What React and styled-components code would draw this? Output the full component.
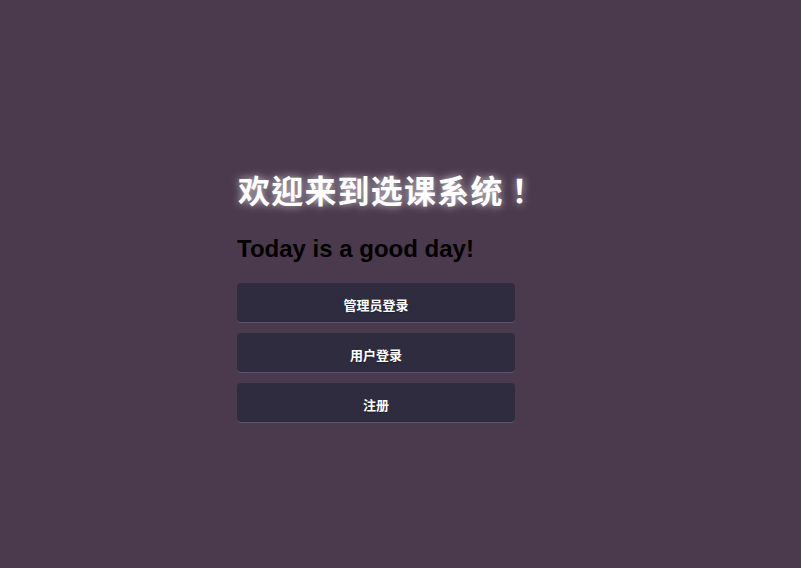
import React from "react";
import styled, { createGlobalStyle } from "styled-components";

const GlobalStyle = createGlobalStyle`
  html, body {
    margin: 0;
    padding: 0;
    height: 100%;
  }
  body {
    background: #4b394d;
    font-family: "Liberation Sans", Arial, "Noto Sans CJK SC", sans-serif;
  }
`;

const Page = styled.div`
  min-height: 568px;
  display: flex;
  justify-content: center;
  padding-top: 167px;
  box-sizing: border-box;
`;

const Login = styled.div`
  width: 327px;
  display: flex;
  flex-direction: column;
`;

const Title = styled.h1`
  margin: 0 0 0 1px;
  font-size: 32px;
  line-height: 44px;
  font-weight: bold;
  color: #fff;
  font-family: "Noto Sans CJK TC", "Liberation Sans", sans-serif;
  text-shadow: 0 0 8px rgba(255, 255, 255, 0.75);
  letter-spacing: 1.2px;
  white-space: nowrap;
`;

const Subtitle = styled.h2`
  margin: 24px 0 20px 0;
  font-size: 24px;
  line-height: 28px;
  font-weight: bold;
  color: #000;
`;

const ButtonList = styled.div`
  display: flex;
  flex-direction: column;
  gap: 10px;
`;

const Button = styled.button`
  width: 278px;
  height: 40px;
  border: none;
  border-radius: 4px;
  background: #2f2c40;
  box-shadow: inset 0 -1px 0 #5a5570;
  color: #fff;
  font-size: 13px;
  font-weight: bold;
  font-family: "Noto Sans CJK SC", "Liberation Sans", sans-serif;
  text-shadow: 0 1px 1px rgba(0, 0, 0, 0.35);
  cursor: pointer;
  padding: 3px 0 0 0;
`;

export default function App() {
  return (
    <>
      <GlobalStyle />
      <Page>
        <Login>
          <Title>欢迎来到选课系统！</Title>
          <Subtitle>Today is a good day!</Subtitle>
          <ButtonList>
            <Button>管理员登录</Button>
            <Button>用户登录</Button>
            <Button>注册</Button>
          </ButtonList>
        </Login>
      </Page>
    </>
  );
}
